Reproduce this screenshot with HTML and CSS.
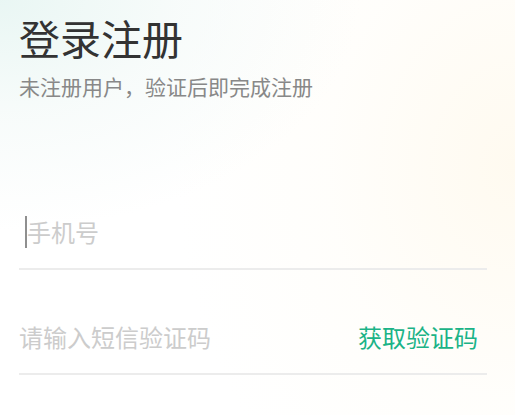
FILE: index.html
```html
<!DOCTYPE html>
<html lang="zh-CN">
<head>
<meta charset="utf-8">
<title>登录注册</title>
<link rel="stylesheet" href="styles.css">
</head>
<body>
<main class="page">
  <header class="header">
    <h1 class="title">登录注册</h1>
    <p class="subtitle">未注册用户，验证后即完成注册</p>
  </header>
  <form class="form">
    <div class="field field-phone">
      <span class="caret"></span>
      <span class="placeholder">手机号</span>
    </div>
    <div class="field field-code">
      <span class="placeholder">请输入短信验证码</span>
      <span class="get-code">获取验证码</span>
    </div>
  </form>
</main>
</body>
</html>
```

FILE: styles.css
```css
html, body {
  margin: 0;
  padding: 0;
  height: 100%;
}
body {
  font-family: "Noto Sans CJK SC", "Noto Sans", sans-serif;
  background-color: #ffffff;
  background-image:
    radial-gradient(ellipse 360px 230px at 0% 0%, rgba(232, 246, 243, 0.95), rgba(240, 248, 246, 0.5) 50%, rgba(255, 255, 255, 0) 100%),
    radial-gradient(ellipse 340px 420px at 100% 40%, rgba(255, 249, 236, 0.8), rgba(255, 252, 245, 0.4) 55%, rgba(255, 255, 255, 0) 100%);
  overflow: hidden;
}
.page {
  padding: 13px 28px 0 19px;
}
.title {
  margin: 0;
  font-size: 41px;
  line-height: 48px;
  font-weight: 400;
  color: #333333;
}
.subtitle {
  margin: 10px 0 0;
  font-size: 21px;
  line-height: 30px;
  color: #888888;
}
.form {
  margin-top: 113px;
  display: flex;
  flex-direction: column;
  gap: 49px;
}
.field {
  display: flex;
  align-items: center;
  height: 36px;
  padding-bottom: 18px;
  border-bottom: 2px solid #ececec;
  font-size: 24px;
  line-height: 36px;
}
.field-code {
  padding-bottom: 18px;
}
.caret {
  width: 2px;
  height: 32px;
  margin-left: 6px;
  background: #8f8f8f;
}
.placeholder {
  color: #cccccc;
}
.get-code {
  margin-left: auto;
  margin-right: 9px;
  color: #1bb387;
}
```
